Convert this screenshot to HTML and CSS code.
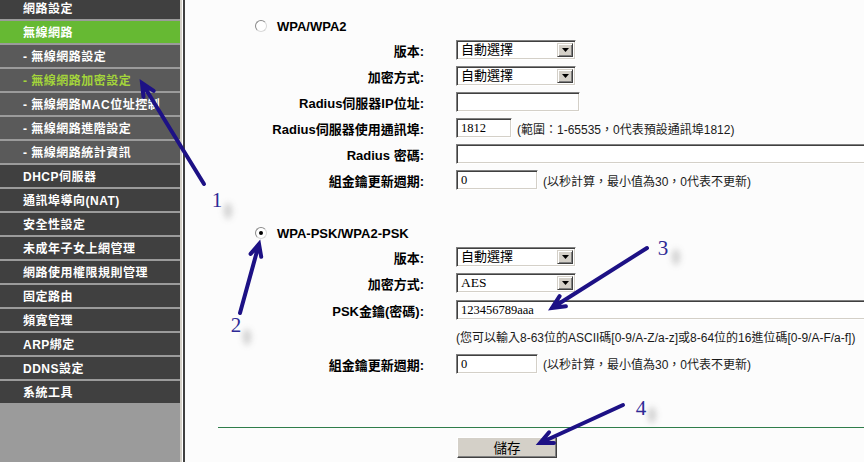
FILE: index.html
```html
<!DOCTYPE html>
<html lang="zh-Hant">
<head>
<meta charset="utf-8">
<title>無線網路加密設定</title>
<link rel="stylesheet" href="styles.css">
</head>
<body>
<div class="page">
  <nav class="side">
    <div class="menu">
      <div class="item">網路設定</div>
      <div class="item active">無線網路</div>
      <div class="item sub">- 無線網路設定</div>
      <div class="item sub cur">- 無線網路加密設定</div>
      <div class="item sub">- 無線網路MAC位址控制</div>
      <div class="item sub">- 無線網路進階設定</div>
      <div class="item sub">- 無線網路統計資訊</div>
      <div class="item">DHCP伺服器</div>
      <div class="item">通訊埠導向(NAT)</div>
      <div class="item">安全性設定</div>
      <div class="item">未成年子女上網管理</div>
      <div class="item">網路使用權限規則管理</div>
      <div class="item">固定路由</div>
      <div class="item">頻寬管理</div>
      <div class="item">ARP綁定</div>
      <div class="item">DDNS設定</div>
      <div class="item">系統工具</div>
    </div>
  </nav>
  <div class="edge"></div>
  <main class="main">
    <div class="head first"><span class="radio"></span><span class="title">WPA/WPA2</span></div>
    <div class="form">
      <div class="lbl">版本:</div>
      <div class="fld"><div class="sel w120"><span class="val">自動選擇</span><span class="drop"><svg width="7" height="4" viewBox="0 0 7 4"><polygon points="0,0 7,0 3.5,4" fill="#000"/></svg></span></div></div>
      <div class="lbl">加密方式:</div>
      <div class="fld"><div class="sel w120"><span class="val">自動選擇</span><span class="drop"><svg width="7" height="4" viewBox="0 0 7 4"><polygon points="0,0 7,0 3.5,4" fill="#000"/></svg></span></div></div>
      <div class="lbl">Radius伺服器IP位址:</div>
      <div class="fld"><div class="tb w124"></div></div>
      <div class="lbl">Radius伺服器使用通訊埠:</div>
      <div class="fld"><div class="tb w56">1812</div><span class="note">(範圍：1-65535，0代表預設通訊埠1812)</span></div>
      <div class="lbl">Radius 密碼:</div>
      <div class="fld"><div class="tb wide"></div></div>
      <div class="lbl">組金鑰更新週期:</div>
      <div class="fld"><div class="tb w82">0</div><span class="note">(以秒計算，最小值為30，0代表不更新)</span></div>
    </div>

    <div class="head second"><span class="radio on"></span><span class="title">WPA-PSK/WPA2-PSK</span></div>
    <div class="form psk">
      <div class="lbl">版本:</div>
      <div class="fld"><div class="sel w120"><span class="val">自動選擇</span><span class="drop"><svg width="7" height="4" viewBox="0 0 7 4"><polygon points="0,0 7,0 3.5,4" fill="#000"/></svg></span></div></div>
      <div class="lbl">加密方式:</div>
      <div class="fld"><div class="sel w120"><span class="val serif">AES</span><span class="drop"><svg width="7" height="4" viewBox="0 0 7 4"><polygon points="0,0 7,0 3.5,4" fill="#000"/></svg></span></div></div>
      <div class="lbl">PSK金鑰(密碼):</div>
      <div class="fld"><div class="tb wide">123456789aaa</div></div>
      <div class="lbl"></div>
      <div class="fld"><span class="note">(您可以輸入8-63位的ASCII碼[0-9/A-Z/a-z]或8-64位的16進位碼[0-9/A-F/a-f])</span></div>
      <div class="lbl">組金鑰更新週期:</div>
      <div class="fld"><div class="tb w82">0</div><span class="note">(以秒計算，最小值為30，0代表不更新)</span></div>
    </div>

    <div class="rule"></div>
    <div class="actions"><button class="btn" type="button">儲存</button></div>
  </main>

  <svg class="annot" width="864" height="462" viewBox="0 0 864 462">
    <defs>
      <filter id="blur" x="-100%" y="-100%" width="300%" height="300%"><feGaussianBlur stdDeviation="3"/></filter>
    </defs>
    <g fill="#9a9a9a" opacity="0.45" filter="url(#blur)">
      <ellipse cx="228" cy="211" rx="4" ry="8"/>
      <ellipse cx="247" cy="337" rx="4" ry="8"/>
      <ellipse cx="676" cy="257" rx="4" ry="8"/>
      <ellipse cx="652" cy="415" rx="4" ry="8"/>
    </g>
    <g fill="none" stroke="#1d1185" stroke-width="4" stroke-linecap="round" stroke-linejoin="miter">
      <path d="M204,184 L142,83 M143.5,97 L142,83 L153.7,90.8"/>
      <path d="M240,313 L259,244 M250.6,253.9 L259,244 L261.2,256.8"/>
      <path d="M647,248 L552,308 M565.9,306.2 L552,308 L559.6,296.2"/>
      <path d="M623,405 L540,443 M554,443.1 L540,443 L549.1,432.3"/>
    </g>
    <g class="num" fill="#2e2a96" text-anchor="middle">
      <text x="217" y="207">1</text>
      <text x="236" y="332">2</text>
      <text x="663" y="255">3</text>
      <text x="641" y="415">4</text>
    </g>
  </svg>
</div>
</body>
</html>
```

FILE: styles.css
```css
html, body {
  margin: 0;
  padding: 0;
  background: #fcfcfc;
}

.page {
  position: relative;
  width: 864px;
  height: 462px;
  overflow: hidden;
  display: flex;
  font-family: "Liberation Sans", "Noto Sans CJK TC", sans-serif;
}

/* ---------- sidebar ---------- */
.side {
  width: 180px;
  flex: none;
  background: #9b9b9b;
  overflow: hidden;
}

.menu {
  margin-top: -3px;
}

.item {
  height: 20px;
  padding-top: 2px;
  margin-bottom: 2px;
  background: #404040;
  color: #fff;
  font-weight: bold;
  font-size: 12px;
  letter-spacing: 0.5px;
  line-height: 21px;
  padding-left: 23px;
  white-space: nowrap;
  overflow: hidden;
}

.item.active {
  background: #66b933;
}

.item.sub {
  background: #5a5a5a;
}

.item.cur {
  color: #a3d43b;
}

.edge {
  width: 5px;
  flex: none;
  background: linear-gradient(to right, #d4d0c8 0 2px, #ffffff 2px 3px, #404040 3px 5px);
}

/* ---------- main ---------- */
.main {
  flex: 1;
  min-width: 0;
  background: #fcfcfc;
  overflow: hidden;
  padding-top: 15px;
}

.head {
  height: 22px;
  display: flex;
  align-items: center;
  padding-left: 70px;
}

.head.second {
  margin-top: 29px;
}

.radio {
  width: 12px;
  height: 12px;
  box-sizing: border-box;
  border-radius: 50%;
  border: 1px solid;
  border-color: #8a8a8a #d8d8d8 #d8d8d8 #8a8a8a;
  background: #fff;
  display: flex;
  align-items: center;
  justify-content: center;
  flex: none;
}

.radio.on::after {
  content: "";
  width: 4px;
  height: 4px;
  border-radius: 50%;
  background: #000;
}

.title {
  margin-left: 10px;
  font-weight: bold;
  font-size: 13px;
  color: #000;
}

.form {
  display: grid;
  grid-template-columns: 239px 1fr;
  grid-auto-rows: 26px;
  column-gap: 32px;
  align-items: center;
}

.form.psk {
  grid-template-rows: 26px 26px 27px 27px 27px;
}

.lbl {
  text-align: right;
  font-weight: bold;
  font-size: 13px;
  color: #000;
  white-space: nowrap;
  padding-top: 1px;
}

.fld {
  display: flex;
  align-items: center;
  gap: 5px;
  white-space: nowrap;
  min-width: 0;
}

.note {
  font-size: 12px;
  color: #1a1a1a;
}

.sel, .tb {
  height: 20px;
  box-sizing: border-box;
  border: 1px solid;
  border-color: #808080 #ffffff #ffffff #808080;
  box-shadow: inset 1px 1px 0 #404040, inset -1px -1px 0 #d4d0c8;
  background: #fff;
  flex: none;
}

.sel {
  display: flex;
  padding: 2px;
}

.val {
  flex: 1;
  padding-left: 2px;
  font-size: 13px;
  line-height: 14px;
  color: #000;
}

.val.serif {
  font-family: "Liberation Serif", serif;
  font-size: 13.5px;
}

.drop {
  width: 16px;
  box-sizing: border-box;
  background: #d4d0c8;
  border: 1px solid;
  border-color: #d4d0c8 #404040 #404040 #d4d0c8;
  box-shadow: inset 1px 1px 0 #fff, inset -1px -1px 0 #808080;
  display: flex;
  align-items: center;
  justify-content: center;
}

.tb {
  padding-left: 4px;
  font-family: "Liberation Serif", serif;
  font-size: 12.5px;
  line-height: 18px;
  color: #000;
}

.w120 { width: 120px; }
.w124 { width: 124px; }
.w56 { width: 56px; }
.w82 { width: 82px; }
.wide { width: 430px; }

.rule {
  height: 1px;
  margin: 50px 0 0 33px;
  background: #2f7d4a;
}

.actions {
  padding: 9px 0 0 272px;
}

.btn {
  width: 100px;
  height: 21px;
  padding: 0;
  background: #d4d0c8;
  border: 1px solid;
  border-color: #ffffff #404040 #404040 #ffffff;
  box-shadow: inset -1px -1px 0 #808080;
  font-family: "Noto Sans CJK TC", sans-serif;
  font-size: 13.5px;
  line-height: 19px;
  color: #000;
  display: block;
}

/* ---------- annotations ---------- */
.annot {
  position: absolute;
  left: 0;
  top: 0;
  pointer-events: none;
}

.num text {
  font-family: "Liberation Serif", serif;
  font-size: 21px;
}
```
